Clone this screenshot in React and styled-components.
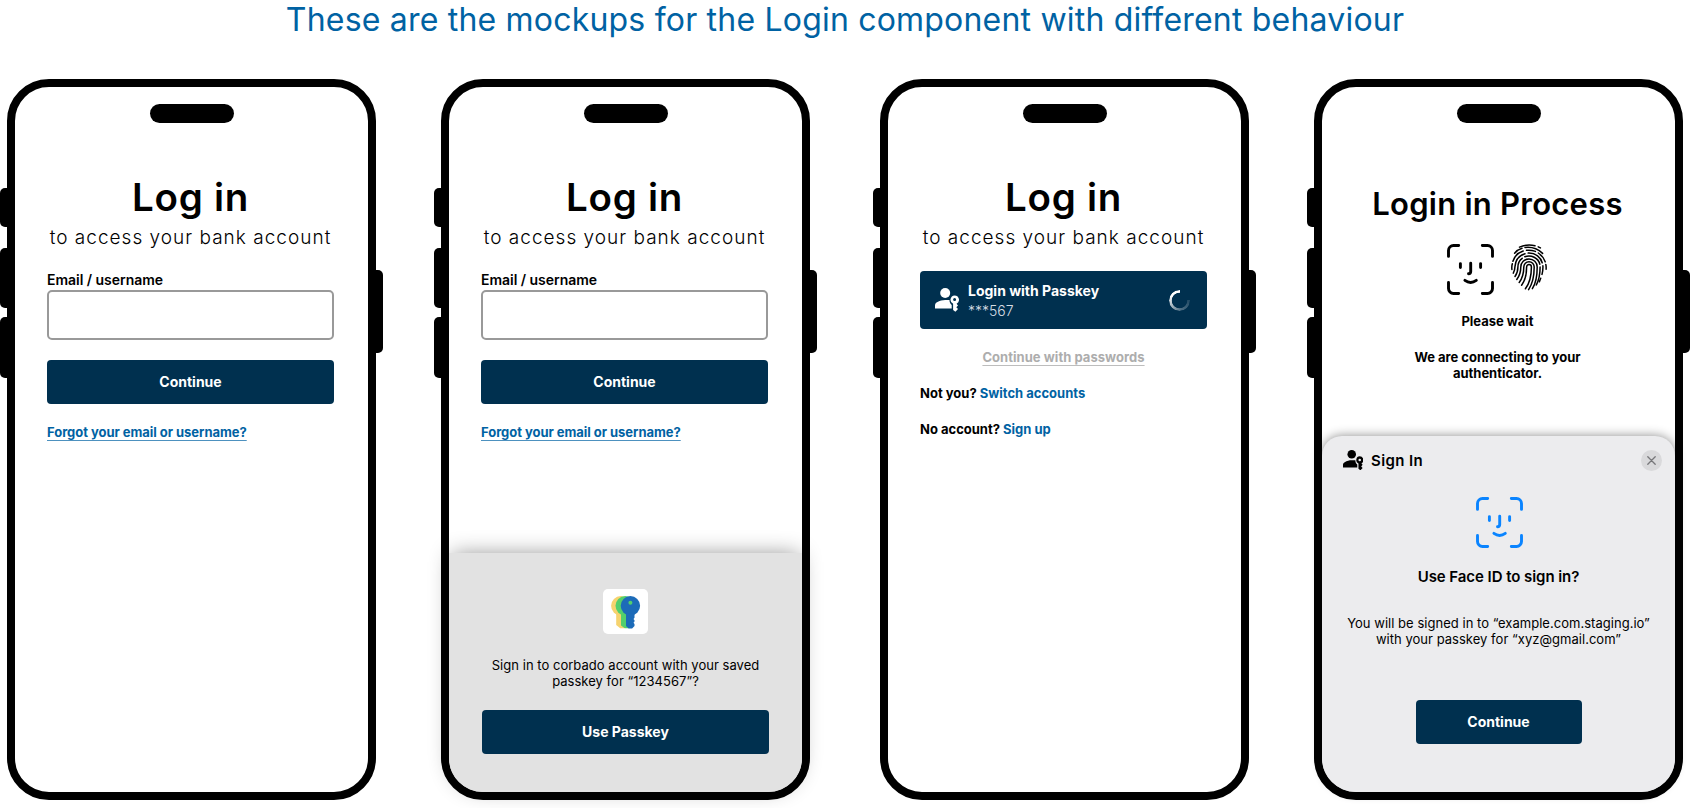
import React from "react";
import styled, { createGlobalStyle } from "styled-components";

const NAVY = "#00304f";
const BLUE = "#0062a3";

const GlobalStyle = createGlobalStyle`
  *, *::before, *::after { box-sizing: border-box; }
  body {
    margin: 0;
    background: #fff;
    color: #000;
    font-family: Inter, "Liberation Sans", sans-serif;
    overflow: hidden;
  }
  h1, h2, h3, p { margin: 0; }
  svg { display: block; flex: none; }
`;

const Page = styled.main`
  width: 1690px;
  height: 808px;
  overflow: hidden;
  display: flex;
  flex-direction: column;
`;

const PageTitle = styled.h1`
  height: 79px;
  font-size: 32px;
  line-height: 40px;
  font-weight: 400;
  letter-spacing: 0.2px;
  color: ${BLUE};
  text-align: center;
`;

const Gallery = styled.div`
  display: flex;
  justify-content: space-between;
`;

const Pair = styled.div`
  display: flex;
  gap: 51px;
`;

const Device = styled.div`
  display: flex;
  width: 383px;
  height: 720.5px;
`;

const Rail = styled.div`
  width: 7px;
  display: flex;
  flex-direction: column;
  padding-top: ${(p) => p.$top}px;
`;

const SideKey = styled.div`
  height: ${(p) => p.$height}px;
  margin-bottom: ${(p) => p.$gap || 0}px;
  background: #000;
  border-radius: ${(p) => (p.$right ? "0 5px 5px 0" : "5px 0 0 5px")};
`;

const Body = styled.div`
  width: 369px;
  height: 100%;
  border: 8px solid #000;
  border-radius: 42px;
  display: flex;
  flex-direction: column;
`;

const Island = styled.div`
  width: 84px;
  height: 19px;
  margin: 17px auto 0;
  border-radius: 10px;
  background: #000;
  flex: none;
`;

const Content = styled.div`
  flex: 1;
  display: flex;
  flex-direction: column;
  padding: 50px 34px 0 32px;
`;

const Heading = styled.h2`
  font-size: 38.5px;
  line-height: 48px;
  font-weight: 600;
  letter-spacing: 0.75px;
  text-align: center;
`;

const Subheading = styled.p`
  margin: 4px -4px 0;
  font-size: 19px;
  line-height: 26px;
  font-weight: 300;
  letter-spacing: 1.02px;
  text-align: center;
  white-space: nowrap;
`;

const Field = styled.label`
  display: flex;
  flex-direction: column;
  margin-top: 20px;
  font-size: 14px;
  line-height: 17px;
  font-weight: 600;
  letter-spacing: -0.03px;
`;

const Input = styled.input`
  height: 50px;
  margin-top: 2px;
  border: 2px solid #999;
  border-radius: 5px;
  background: #fff;
`;

const Button = styled.button`
  width: ${(p) => p.$width || 287}px;
  height: 44px;
  margin-top: ${(p) => p.$top}px;
  padding: 0 0 1px;
  border: 0;
  border-radius: 4px;
  background: ${NAVY};
  color: #fff;
  font: 700 14px/17px Inter, "Liberation Sans", sans-serif;
  flex: none;
`;

const TextLink = styled.a`
  align-self: ${(p) => (p.$muted ? "center" : "flex-start")};
  margin-top: 20px;
  font-size: 13px;
  line-height: 16px;
  font-weight: 700;
  letter-spacing: ${(p) => (p.$muted ? 0.04 : -0.04)}px;
  color: ${(p) => (p.$muted ? "#adadad" : BLUE)};
  text-decoration: underline;
  text-decoration-color: ${(p) => (p.$muted ? "#bdbdbd" : "#4d91bf")};
  text-decoration-thickness: 1px;
  text-underline-offset: 2.5px;
`;

const Prompt = styled.p`
  margin-top: 20px;
  font-size: 13px;
  line-height: 16px;
  font-weight: 700;
`;

const Accent = styled.a`
  color: ${BLUE};
`;

const PasskeyCard = styled.div`
  display: flex;
  align-items: center;
  height: 58px;
  margin-top: 20px;
  padding: 0 17px 0 15px;
  border-radius: 4px;
  background: ${NAVY};
  color: #fff;
`;

const CardText = styled.div`
  flex: 1;
  margin-left: 9px;
  padding-top: 2px;
  font-size: 14px;
  line-height: 20px;
`;

const CardTitle = styled.p`
  font-weight: 700;
`;

const CardHint = styled.p`
  font-weight: 300;
  color: #d5dde3;
`;

const Spinner = styled.div`
  width: 21px;
  height: 21px;
  border-radius: 50%;
  background: conic-gradient(
    from 90deg,
    rgba(255, 255, 255, 0.14) 0deg,
    rgba(255, 255, 255, 0.3) 80deg,
    #fff 210deg,
    #fff 270deg,
    transparent 271deg
  );
  mask: radial-gradient(circle, transparent 7.4px, #000 8.1px);
`;

const ProcessContent = styled.div`
  flex: 1;
  display: flex;
  flex-direction: column;
  align-items: center;
  padding: 61px 34px 0 32px;
  text-align: center;
`;

const ProcessHeading = styled.h2`
  font-size: 31px;
  line-height: 40px;
  font-weight: 600;
  letter-spacing: 0.25px;
  white-space: nowrap;
`;

const Biometrics = styled.div`
  display: flex;
  gap: 17px;
  margin: 19.5px 0 18px;
  padding-right: 1px;
`;

const Status = styled.p`
  width: 190px;
  margin-bottom: 20px;
  font-size: 13px;
  line-height: 16px;
  font-weight: 700;
  letter-spacing: -0.02px;
`;

const PasskeySheet = styled.section`
  height: 239px;
  display: flex;
  flex-direction: column;
  align-items: center;
  padding: 36px 33px 0 33px;
  border-radius: 0 0 34px 34px;
  background: #e2e2e2;
  box-shadow: 0 -1px 22px -3px rgba(0, 0, 0, 0.46);
`;

const LogoTile = styled.div`
  width: 45px;
  height: 45px;
  border-radius: 5px;
  background: #fff;
`;

const SheetText = styled.p`
  margin-top: ${(p) => p.$top}px;
  font-size: 13px;
  line-height: 16px;
  font-weight: ${(p) => p.$weight || 400};
  letter-spacing: 0.03px;
  text-align: center;
  white-space: nowrap;
`;

const SignInSheet = styled.section`
  height: 356px;
  display: flex;
  flex-direction: column;
  align-items: center;
  border-radius: 20px 20px 34px 34px;
  background: #ececee;
  box-shadow: 0 0 11px rgba(0, 0, 0, 0.46);
`;

const SheetHeader = styled.header`
  align-self: stretch;
  display: flex;
  align-items: center;
  height: 21px;
  margin-top: 14px;
  padding: 0 13px 0 20.5px;
`;

const SheetTitle = styled.h3`
  flex: 1;
  margin-left: 8px;
  font-size: 15px;
  line-height: 21px;
  font-weight: 600;
  letter-spacing: 0.4px;
`;

const CloseButton = styled.button`
  display: grid;
  place-items: center;
  width: 21px;
  height: 21px;
  padding: 0;
  border: 0;
  border-radius: 50%;
  background: #d9d9db;
  color: #77777a;
`;

const SheetQuestion = styled.h3`
  margin-top: 18px;
  font-size: 15px;
  line-height: 22px;
  font-weight: 600;
  letter-spacing: -0.06px;
`;

const FaceFrame = styled.div`
  margin-top: 26px;
  padding-left: 1px;
`;

function FaceIdIcon({ color = "#000" }) {
  return (
    <svg width="47" height="51" viewBox="0 0 47 51" fill="none" stroke={color} strokeWidth="2.9" strokeLinecap="round">
      <path d="M1.5 12.4V6.5a5 5 0 0 1 5-5h5.2M35.3 1.5h5.2a5 5 0 0 1 5 5v5.9M45.5 38.4v6.1a5 5 0 0 1-5 5h-5.2M11.7 49.5H6.5a5 5 0 0 1-5-5v-6.1" />
      <path d="M13.4 19.6v4M33.6 19.6v4M23.7 19.3v8.3q0 2.2-2.2 2.2M17.9 36.3q5.7 4.2 11.4 0" />
    </svg>
  );
}

function FingerprintIcon() {
  return (
    <svg width="36" height="47" viewBox="0 0 36 47" fill="none" stroke="#000" strokeWidth="1.5" strokeLinecap="round">
      <path d="M8.5 3.1Q16-.3 24 1.7M27.2 2.8l2.2 1.1" />
      <path d="M3.6 9.2Q6.5 5.6 11 4.2M14 3.5Q24 2.2 31.6 9.4" />
      <path d="M1.9 17.2C3.6 12 7.2 8.6 12.2 7M15.5 6.3Q20 5.7 24.4 7.4M27.3 9Q32.4 12.4 34.2 17.8" />
      <path d="M.9 25.5C.7 23.5.8 21.5 1.3 19.8M34.8 20.4q.5 2.3.3 4.8" />
      <path d="M2.3 29.2C3.8 26.6 3.9 24.5 4 22.4 4.5 15.6 8.6 11.3 14 9.7M17.2 9.1C24.8 8.8 29.8 13.3 31.2 18.8M31.9 21.8q.2 4.6-.9 8.6M29.7 34.2l-1.3 3.5" />
      <path d="M4 32.5C6.2 29.5 6.9 27 6.9 23 6.9 19.4 8.5 16.3 11.2 14.3M13.8 12.8C20 10.3 27.5 14 28.8 20.2M29.1 23C29.1 30 28 36 25.3 41" />
      <path d="M5.8 35.5C8.8 31.5 9.8 28 9.8 23 9.8 18.6 13.4 14.9 18 14.9S26.2 18.6 26.2 23C26.2 32 25 39 21.4 44.6" />
      <path d="M8.2 38.5C11.6 34 12.8 30 12.8 23a5.2 5.2 0 0 1 10.4 0C23.2 33 22 39 17.6 45.6" />
      <path d="M10.6 41.2C14.6 36 15.6 31 15.6 23a2.4 2.4 0 0 1 4.8 0C20.4 32.5 19.2 38.5 14.4 44.8" />
    </svg>
  );
}

function PersonKeyIcon({ size = 24 }) {
  return (
    <svg width={size} height={size} viewBox="0 0 24 24" fill="currentColor">
      <circle cx="10.2" cy="5" r="5" />
      <path d="M0 20.6v-3.2C0 15.9.8 14.8 2 14.2 4.7 12.8 7.4 12.1 10.2 12.1h4.3c-.1 2.2.8 3.8 2.2 4.9v3.6Z" />
      <path
        fillRule="evenodd"
        d="M19.6 7.4a4.4 4.4 0 0 1 2 8.3l1.4 1.7-1.7 1.8 1.7 1.8-2.6 2.8-2.3-1.9v-6.1a4.4 4.4 0 0 1 1.5-8.4Zm0 2.7a1.5 1.5 0 1 0 0 3 1.5 1.5 0 0 0 0-3Z"
      />
    </svg>
  );
}

function KeysLogo() {
  return (
    <svg width="45" height="45" viewBox="0 0 45 45">
      <g fill="#f6d36f">
        <circle cx="17.8" cy="16.8" r="9.7" />
        <path d="M13.2 24h8.4v15.2h-4.4L13.2 36Z" />
      </g>
      <g fill="#53cf6c">
        <circle cx="22.2" cy="16.8" r="9.7" />
        <path d="M18 24h8.4v15.2h-4.6L18 36.4Z" />
      </g>
      <g fill="#1c6bb8">
        <circle cx="27.4" cy="16.8" r="9.7" />
        <path d="M23 24.5h8.5v4.2l-1 1.2 1 1.3v1.3l-1 1.2 1 1.3v2l-2.4 2.6h-3.4L23 37Z" />
      </g>
      <circle cx="27.4" cy="13.8" r="2" fill="#53cf6c" />
    </svg>
  );
}

function CloseIcon() {
  return (
    <svg width="9" height="9" viewBox="0 0 9 9" stroke="currentColor" strokeWidth="1.3" strokeLinecap="round">
      <path d="M.8.8l7.4 7.4M8.2.8.8 8.2" />
    </svg>
  );
}

function Phone({ children }) {
  return (
    <Device>
      <Rail $top={108.5}>
        <SideKey $height={39} $gap={21} />
        <SideKey $height={60} $gap={9.5} />
        <SideKey $height={60.5} />
      </Rail>
      <Body>
        <Island />
        {children}
      </Body>
      <Rail $top={191}>
        <SideKey $height={83} $right />
      </Rail>
    </Device>
  );
}

function LoginIntro() {
  return (
    <>
      <Heading>Log in</Heading>
      <Subheading>to access your bank account</Subheading>
    </>
  );
}

function LoginForm() {
  return (
    <Content>
      <LoginIntro />
      <Field>
        Email / username
        <Input />
      </Field>
      <Button $top={20}>Continue</Button>
      <TextLink>Forgot your email or username?</TextLink>
    </Content>
  );
}

export default function App() {
  return (
    <Page>
      <GlobalStyle />
      <PageTitle>These are the mockups for the Login component with different behaviour</PageTitle>
      <Gallery>
        <Pair>
          <Phone>
            <LoginForm />
          </Phone>
          <Phone>
            <LoginForm />
            <PasskeySheet>
              <LogoTile>
                <KeysLogo />
              </LogoTile>
              <SheetText $top={23}>
                Sign in to corbado account with your saved
                <br />
                passkey for “1234567”?
              </SheetText>
              <Button $top={21}>Use Passkey</Button>
            </PasskeySheet>
          </Phone>
        </Pair>
        <Pair>
          <Phone>
            <Content>
              <LoginIntro />
              <PasskeyCard>
                <PersonKeyIcon />
                <CardText>
                  <CardTitle>Login with Passkey</CardTitle>
                  <CardHint>***567</CardHint>
                </CardText>
                <Spinner />
              </PasskeyCard>
              <TextLink $muted>Continue with passwords</TextLink>
              <Prompt>
                Not you? <Accent>Switch accounts</Accent>
              </Prompt>
              <Prompt>
                No account? <Accent>Sign up</Accent>
              </Prompt>
            </Content>
          </Phone>
          <Phone>
            <ProcessContent>
              <ProcessHeading>Login in Process</ProcessHeading>
              <Biometrics>
                <FaceIdIcon />
                <FingerprintIcon />
              </Biometrics>
              <Status>Please wait</Status>
              <Status>We are connecting to your authenticator.</Status>
            </ProcessContent>
            <SignInSheet>
              <SheetHeader>
                <PersonKeyIcon size={20.5} />
                <SheetTitle>Sign In</SheetTitle>
                <CloseButton>
                  <CloseIcon />
                </CloseButton>
              </SheetHeader>
              <FaceFrame>
                <FaceIdIcon color="#0a84ff" />
              </FaceFrame>
              <SheetQuestion>Use Face ID to sign in?</SheetQuestion>
              <SheetText $top={27}>
                You will be signed in to “example.com.staging.io”
                <br />
                with your passkey for “xyz@gmail.com”
              </SheetText>
              <Button $top={53} $width={166}>
                Continue
              </Button>
            </SignInSheet>
          </Phone>
        </Pair>
      </Gallery>
    </Page>
  );
}
